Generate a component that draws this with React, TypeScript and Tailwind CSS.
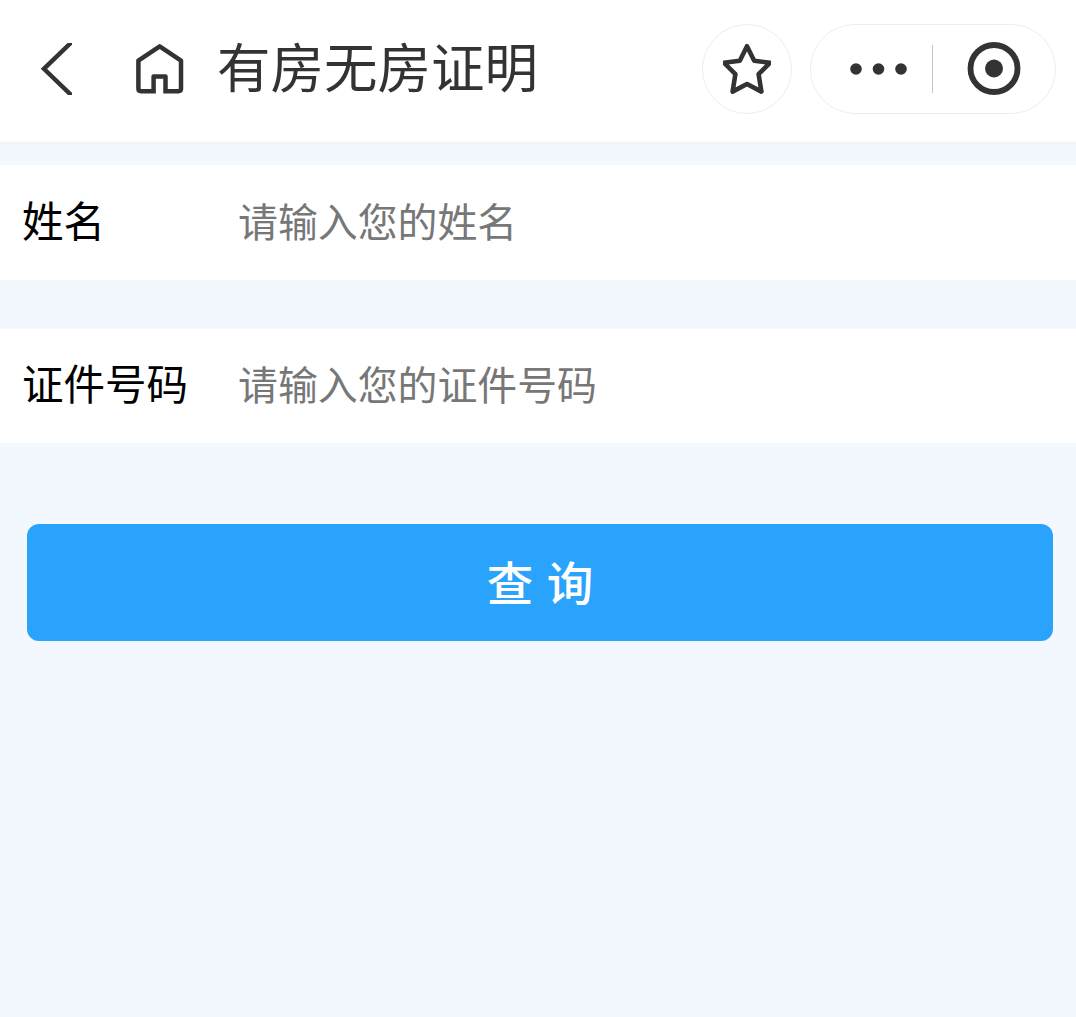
const fields = [
  { id: "name", label: "姓名", placeholder: "请输入您的姓名", row: "h-[115px]" },
  { id: "idNumber", label: "证件号码", placeholder: "请输入您的证件号码", row: "h-[114px]" },
] as const;

function BackIcon() {
  return (
    <svg width="32" height="52" viewBox="0 0 32 52" fill="none" aria-hidden="true">
      <path d="M34 -3.2L3.9 25.8L34 54.8" stroke="#333" strokeWidth="4.4" />
    </svg>
  );
}

function HomeIcon() {
  return (
    <svg width="48" height="52" viewBox="0 0 48 52" fill="none" aria-hidden="true">
      <path
        d="M17.6 50.5V33.6H29.5V50.5M17.6 48.2H5Q2.4 48.2 2.4 45.6V17.6L23.7 3.4L45 17.6V45.6Q45 48.2 42.4 48.2H29.5"
        stroke="#333"
        strokeWidth="4.5"
        strokeLinejoin="round"
      />
    </svg>
  );
}

function StarIcon() {
  return (
    <svg width="48" height="52" viewBox="0 0 48 52" fill="none" aria-hidden="true">
      <path
        d="M24 3.2L31.2 17.7L47 19.8L35.6 31.2L38.4 48.6L24 41L9.6 48.6L12.4 31.2L1 19.8L16.8 17.7Z"
        stroke="#333"
        strokeWidth="4.6"
        strokeLinejoin="round"
      />
    </svg>
  );
}

function Header() {
  return (
    <header className="flex h-36 items-start border-b-2 border-[#f1f4f7] bg-white pl-10 pr-5 pt-6">
      <div className="flex h-[90px] items-center">
        <button aria-label="返回">
          <BackIcon />
        </button>
        <button aria-label="首页" className="ml-16">
          <HomeIcon />
        </button>
        <h1 className="ml-[33px] pb-2 text-[53.5px] leading-[82px] text-[#333]">有房无房证明</h1>
      </div>

      <div className="ml-auto flex h-[90px] gap-[18px]">
        <button
          aria-label="收藏"
          className="flex size-[90px] items-center justify-center rounded-full border border-[#ededed]"
        >
          <StarIcon />
        </button>
        <div className="flex w-[246px] items-center rounded-full border border-[#ededed]">
          <button aria-label="更多" className="ml-[39px]">
            <svg width="58" height="12" viewBox="0 0 58 12" fill="#333" aria-hidden="true">
              <circle cx="6" cy="6" r="5.8" />
              <circle cx="28.5" cy="6" r="5.8" />
              <circle cx="51" cy="6" r="5.8" />
            </svg>
          </button>
          <span className="ml-6 h-12 w-px bg-[#c4c4c4]" />
          <button aria-label="关闭" className="ml-[34px]">
            <svg width="54" height="54" viewBox="0 0 54 54" fill="none" aria-hidden="true">
              <circle cx="27" cy="26.5" r="23.5" stroke="#333" strokeWidth="5.8" />
              <circle cx="27" cy="26.5" r="9" fill="#333" />
            </svg>
          </button>
        </div>
      </div>
    </header>
  );
}

export default function App() {
  return (
    <div className="min-h-[1017px] w-full bg-[#f3f8ff] font-['Noto_Sans_CJK_SC',sans-serif]">
      <Header />

      <form className="pt-[21px]">
        <div className="flex flex-col gap-[49px]">
          {fields.map((f) => (
            <div key={f.id} className={`flex items-center bg-white pb-2 pl-[22px] ${f.row}`}>
              <label htmlFor={f.id} className="w-[216px] shrink-0 text-[41.5px] leading-[60px] text-black">
                {f.label}
              </label>
              <input
                id={f.id}
                type="text"
                placeholder={f.placeholder}
                className="mt-0.5 h-[60px] min-w-0 flex-1 text-[39.9px] leading-[60px] outline-none placeholder:text-[#777]"
              />
            </div>
          ))}
        </div>

        <button
          type="button"
          className="ml-[27px] mt-[81px] flex h-[117px] w-[1026px] items-center justify-center rounded-xl bg-[#29a3fb] pb-[3px] text-[46.5px] font-medium text-white [word-spacing:3px]"
        >
          查 询
        </button>
      </form>
    </div>
  );
}
